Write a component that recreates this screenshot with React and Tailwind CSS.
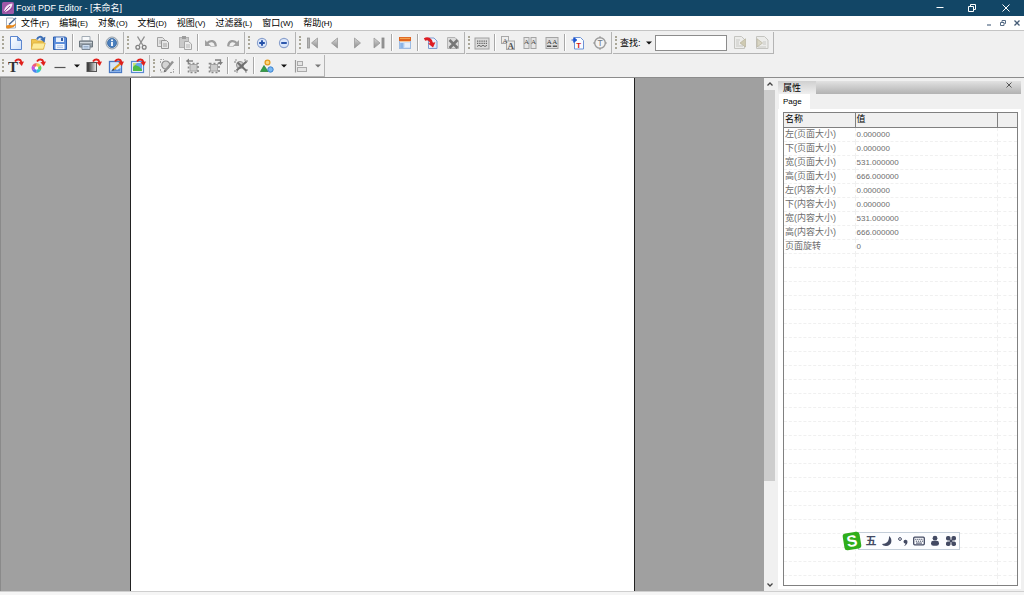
const menus = [
    ["文件", "F"],
    ["编辑", "E"],
    ["对象", "O"],
    ["文档", "D"],
    ["视图", "V"],
    ["过滤器", "L"],
    ["窗口", "W"],
    ["帮助", "H"],
];

const properties = [
    ["左(页面大小)", "0.000000"],
    ["下(页面大小)", "0.000000"],
    ["宽(页面大小)", "531.000000"],
    ["高(页面大小)", "666.000000"],
    ["左(内容大小)", "0.000000"],
    ["下(内容大小)", "0.000000"],
    ["宽(内容大小)", "531.000000"],
    ["高(内容大小)", "666.000000"],
    ["页面旋转", "0"],
];

// empty grid lines continue below the data
const rows = [...properties, ...Array.from({ length: 60 }, () => ["", ""])];

const redArrow = (
    <>
        <path d="M7 3.5 C9 .8 12.5 1 13.4 4" fill="none" stroke="#e0201c" strokeWidth="2" />
        <path d="M10.4 4.2 L16 3.4 L13.8 8 Z" fill="#e0201c" />
    </>
);

const icons = {
    new: (
        <>
            <path d="M2.5 1.5 H9.5 L13.5 5.5 V14.5 H2.5 Z" fill="url(#paper)" stroke="#5b86cf" />
            <path d="M9.5 1.5 V5.5 H13.5 Z" fill="#7fa9e6" stroke="#4f7cc8" strokeWidth=".8" />
        </>
    ),
    open: (
        <>
            <path d="M1.5 4.5 H6 L7.5 6 H13.5 V14 H1.5 Z" fill="#f0c650" stroke="#cfa02e" strokeWidth=".8" />
            <path d="M3 8 H15.2 L13.5 14.2 H1.2 Z" fill="#fdeb9a" stroke="#dcb03c" strokeWidth=".8" />
            <path d="M7 4.5 C8 1.5 11 1 12.6 3" fill="none" stroke="#3d6fb5" strokeWidth="2" />
            <path d="M10 4 L15.4 1.8 L14.6 7.4 Z" fill="#3d6fb5" />
        </>
    ),
    save: (
        <>
            <path d="M1.5 2 H13.5 L14.5 3 V14.5 H1.5 Z" fill="#5c8edb" stroke="#2f5fae" />
            <rect x="4" y="2.5" width="8" height="4.5" fill="#e8f0fb" />
            <rect x="9" y="3" width="2" height="3" fill="#2f5ba6" />
            <rect x="3.5" y="9" width="9" height="5.2" fill="#f4f8fd" />
            <path d="M5 10.8 H11 M5 12.6 H11" stroke="#9db8df" strokeWidth=".8" />
        </>
    ),
    print: (
        <>
            <path d="M4 1.5 H12 V6 H4 Z" fill="#f7f9fb" stroke="#a3acb5" />
            <path d="M1.5 6 H14.5 V12 H1.5 Z" fill="#9aa3aa" stroke="#6c767e" />
            <path d="M2 7.5 H14" stroke="#cfd6dc" />
            <path d="M4 9.5 H12 V14.5 H4 Z" fill="#cfdff2" stroke="#7a8692" />
            <path d="M5.5 11.5 H10.5 M5.5 13 H10.5" stroke="#8fa6c2" strokeWidth=".8" />
        </>
    ),
    info: (
        <>
            <circle cx="8" cy="8" r="6" fill="#d5dae0" stroke="#95a0aa" />
            <circle cx="8" cy="8" r="4.5" fill="#4a7fbe" stroke="#2b5c98" strokeWidth=".7" />
            <path d="M8 7 V11" stroke="#fff" strokeWidth="1.8" />
            <circle cx="8" cy="5.3" r="1" fill="#fff" />
        </>
    ),
    cut: (
        <>
            <path d="M4.5 1.5 L10 10.5 M11.5 1.5 L6 10.5" stroke="#8f8f8f" strokeWidth="1.4" />
            <circle cx="4.8" cy="12.2" r="1.9" fill="none" stroke="#808080" strokeWidth="1.3" />
            <circle cx="11.2" cy="12.2" r="1.9" fill="none" stroke="#808080" strokeWidth="1.3" />
        </>
    ),
    copy: (
        <>
            <path d="M2.5 2.5 H7.5 L9.5 4.5 V11.5 H2.5 Z" fill="#e4e4e4" stroke="#a3a3a3" />
            <path d="M4 6 H8 M4 8 H8" stroke="#b0b0b0" />
            <path d="M6.5 5.5 H11.5 L13.5 7.5 V13.5 H6.5 Z" fill="#e6e6e6" stroke="#969696" />
            <path d="M8 9 H12 M8 11 H12" stroke="#a0a0a0" />
        </>
    ),
    paste: (
        <>
            <rect x="2.5" y="2.5" width="9" height="10" fill="#c9c9c9" stroke="#b0b0b0" />
            <rect x="5" y="1" width="4" height="3" fill="#9c9c9c" />
            <path d="M7.5 6.5 H11.5 L14.5 9 V14.5 H7.5 Z" fill="#ececec" stroke="#a6a6a6" />
            <path d="M9 10 H13 M9 12 H13" stroke="#b4b4b4" />
        </>
    ),
    undo: (
        <>
            <path d="M4 8.500 C7 4.500 12.500 5.500 12.800 11" fill="none" stroke="#9c9c9c" strokeWidth="2.200" />
            <path d="M2 5 V11 H8 Z" fill="#a0a0a0" />
            <path d="M7 11.500 H13.500" stroke="#c4c4c4" />
        </>
    ),
    redo: (
        <>
            <path d="M12 8.500 C9 4.500 3.500 5.500 3.200 11" fill="none" stroke="#9c9c9c" strokeWidth="2.200" />
            <path d="M14 5 V11 H8 Z" fill="#a0a0a0" />
            <path d="M2.500 11.500 H9" stroke="#c4c4c4" />
        </>
    ),
    zoomIn: (
        <>
            <circle cx="8" cy="8" r="4.600" fill="#dbe7fb" stroke="#8aa0cc" strokeWidth="1.100" />
            <path d="M8 5.200 V10.800 M5.200 8 H10.800" stroke="#2350a8" strokeWidth="1.900" />
        </>
    ),
    zoomOut: (
        <>
            <circle cx="8" cy="8" r="4.600" fill="#dbe7fb" stroke="#8aa0cc" strokeWidth="1.100" />
            <path d="M5.200 8 H10.800" stroke="#2350a8" strokeWidth="1.900" />
        </>
    ),
    first: (
        <>
            <rect x="2.500" y="3" width="2" height="10" fill="#b5b5b5" stroke="#929292" strokeWidth=".8" />
            <path d="M12.500 3 V13 L6.500 8 Z" fill="url(#steel)" stroke="#9a9a9a" strokeWidth=".8" />
        </>
    ),
    prev: <path d="M10.500 3 V13 L4.500 8 Z" fill="url(#steel)" stroke="#9a9a9a" strokeWidth=".8" />,
    next: <path d="M5.500 3 V13 L11.500 8 Z" fill="url(#steel)" stroke="#9a9a9a" strokeWidth=".8" />,
    last: (
        <>
            <rect x="11" y="3" width="2" height="10" fill="#999" stroke="#858585" strokeWidth=".8" />
            <path d="M3 3 V13 L9 8 Z" fill="url(#steel)" stroke="#9a9a9a" strokeWidth=".8" />
        </>
    ),
    layout: (
        <>
            <rect x="2.500" y="2.500" width="11" height="11" fill="#cfe1f7" stroke="#9dbbe2" />
            <rect x="2" y="2" width="12" height="4" fill="#dd6420" />
            <path d="M3 3.400 H13" stroke="#f7ab56" />
            <path d="M3 6.500 H13" stroke="#f4c79c" />
            <rect x="3.200" y="8" width="3.300" height="5" fill="#8bb5e8" />
            <path d="M8 9 H13 M8 11 H13" stroke="#fff" strokeWidth="1.200" />
        </>
    ),
    insertPage: (
        <>
            <path d="M5.500 3 H11 L14 6 V13.500 H5.500 Z" fill="url(#paper)" stroke="#7d9bd0" />
            <path d="M1.500 4.500 C5 2.800 8 4.500 8.600 8.500" fill="none" stroke="#dd1d24" strokeWidth="3" />
            <path d="M5 8.600 L12.400 7.200 L10 12.600 Z" fill="#dd1d24" />
        </>
    ),
    deletePage: (
        <>
            <path d="M2.500 2.500 H10 L13.500 6 V13.500 H2.500 Z" fill="#dcdcdc" stroke="#b4b4b4" />
            <path d="M4.500 5 L12.500 13 M12.500 5 L4.500 13" stroke="#777" strokeWidth="2.600" />
        </>
    ),
    keyboard: (
        <>
            <rect x="1" y="3" width="14" height="11" fill="#dcdcdc" stroke="#a0a0a0" />
            <path d="M3 6.200 H13 M3 8.400 H13" stroke="#666" strokeWidth="1.200" strokeDasharray="1.300 .9" />
            <path d="M3 11.500 L5 10.300 L7 11.500 L9 10.300 L11 11.500 L13 10.300" fill="none" stroke="#666" />
        </>
    ),
    fontReplace: (
        <>
            <rect x="1.500" y="1.500" width="7" height="7" fill="#eee" stroke="#a8a8a8" />
            <rect x="6.500" y="6" width="8" height="8.500" fill="#e8e8e8" stroke="#a8a8a8" />
            <text x="2.600" y="7.500" fontSize="7" fontFamily="Liberation Serif" fill="#555">A</text>
            <text x="7.400" y="13.500" fontSize="9" fontWeight="bold" fontFamily="Liberation Serif" fill="#555">A</text>
        </>
    ),
    split: (
        <>
            <rect x="2" y="2.500" width="5" height="11" fill="#e6e6e6" stroke="#a4a4a4" />
            <rect x="9" y="2.500" width="5" height="11" fill="#e6e6e6" stroke="#a4a4a4" />
            <text x="2" y="9" fontSize="7" fontFamily="Liberation Serif" fill="#444">A</text>
            <text x="9" y="9" fontSize="7" fontFamily="Liberation Serif" fill="#444">A</text>
        </>
    ),
    merge: (
        <>
            <rect x="2" y="2.500" width="12" height="11" fill="#ddd" stroke="#a4a4a4" />
            <text x="2.800" y="9" fontSize="7" fontFamily="Liberation Serif" fill="#333">A</text>
            <text x="8.200" y="9" fontSize="7" fontFamily="Liberation Serif" fill="#333">A</text>
            <path d="M3 11.200 H7.200 M8.800 11.200 H13" stroke="#555" strokeWidth="1.400" />
        </>
    ),
    textPage: (
        <>
            <path d="M4.500 2.500 H10.500 L13.500 5.500 V14 H4.500 Z" fill="#fafcff" stroke="#6d92d6" />
            <path d="M1.500 5 H5 M3.800 2.600 L6.800 5 L3.800 7.400 Z" fill="#1c55d0" stroke="#1c55d0" />
            <text x="6.200" y="12.600" fontSize="8" fontWeight="bold" fontFamily="Liberation Sans" fill="#d81818">T</text>
        </>
    ),
    textCircle: (
        <>
            <circle cx="8" cy="8" r="5.300" fill="#f3f3f3" stroke="#9a9a9a" strokeWidth="1.400" />
            <text x="5.400" y="11" fontSize="8.500" fontFamily="Liberation Sans" fill="#6c7684">T</text>
            <path d="M8 1 V3 M8 13 V15 M1 8 H3 M13 8 H15" stroke="#999" />
        </>
    ),
    findPrev: (
        <>
            <path d="M2.500 1.500 H9.500 L12.500 4.500 V13.500 H2.500 Z" fill="#ececea" stroke="#c4c4c0" />
            <path d="M4 5 H8 M4 7 H7 M4 9 H7 M4 11 H11" stroke="#c8c8c4" />
            <path d="M13.500 3.800 V12 L8 8 Z" fill="#cfcab2" stroke="#b7b39d" strokeWidth=".7" />
        </>
    ),
    findNext: (
        <>
            <path d="M2.500 1.500 H10.500 L14 5 V13.500 H2.500 Z" fill="#ececea" stroke="#c4c4c0" />
            <path d="M9 7 H12 M9 9 H12 M4 12 H12" stroke="#c8c8c4" />
            <path d="M3 3.800 V12 L8.500 8 Z" fill="#d8d5c4" stroke="#b7b39d" strokeWidth=".7" />
        </>
    ),
    addText: (
        <>
            <text x="0" y="14" fontSize="15" fontWeight="bold" fontFamily="Liberation Serif" fill="#333">T</text>
            {redArrow}
        </>
    ),
    color: (
        <>
            <path d="M6.500 10 L6.500 5 A5 5 0 0 1 10.800 7.500 Z" fill="#f5c842" />
            <path d="M6.500 10 L10.800 7.500 A5 5 0 0 1 10.800 12.500 Z" fill="#5fd35a" />
            <path d="M6.500 10 L10.800 12.500 A5 5 0 0 1 6.500 15 Z" fill="#2cc6d8" />
            <path d="M6.500 10 L6.500 15 A5 5 0 0 1 2.200 12.500 Z" fill="#4a7ff0" />
            <path d="M6.500 10 L2.200 12.500 A5 5 0 0 1 2.200 7.500 Z" fill="#c154e0" />
            <path d="M6.500 10 L2.200 7.500 A5 5 0 0 1 6.500 5 Z" fill="#ef5b72" />
            <circle cx="6.500" cy="10" r="1.800" fill="#fff" />
            {redArrow}
        </>
    ),
    line: <path d="M2.500 9.500 H13.500" stroke="#555" strokeWidth="1.200" />,
    gradient: (
        <>
            <rect x="1" y="4.500" width="9.500" height="9" fill="url(#fade)" stroke="#555" />
            {redArrow}
        </>
    ),
    editImage: (
        <>
            <rect x="1.500" y="3.500" width="12" height="11" fill="#d5e6fa" stroke="#4777c4" strokeWidth="1.300" />
            <path d="M2.500 13.500 L6 9.500 L9 12 L12.500 10 V13.500 Z" fill="#5a90dd" />
            <path d="M5.500 11.500 L13 5" stroke="#e09a1c" strokeWidth="2.200" />
            <path d="M4 13 L5 10.800 L6.300 12.100 Z" fill="#333" />
            {redArrow}
        </>
    ),
    image: (
        <>
            <rect x="1.500" y="3.500" width="12" height="11" fill="#f4f8ff" stroke="#5b8ad2" strokeWidth="1.200" />
            <rect x="3" y="5" width="9" height="8" fill="#63a9ec" />
            <path d="M3 13 V7 C7 7 10 9 12 11.500 V13 Z" fill="#4dbb45" />
            <path d="M3 5 H7 L3 9 Z" fill="#c9e27a" />
            {redArrow}
        </>
    ),
    editPath: (
        <>
            <path d="M1.500 5 V1.500 H5 M11 14.500 H14.500 V11 M1.500 11 V14 H4" fill="none" stroke="#a4a4a4" strokeDasharray="2 1" />
            <circle cx="6.800" cy="7" r="4" fill="#d4d4d4" stroke="#8c8c8c" strokeWidth="1.200" />
            <path d="M6 13 L14 3.500" stroke="#939393" strokeWidth="2.400" />
            <path d="M4.500 14.500 L5.300 11.800 L7.400 13.600 Z" fill="#707070" />
        </>
    ),
    rotateLeft: (
        <>
            <rect x="5" y="6.500" width="7" height="6.500" fill="#ccc" stroke="#a6a6a6" />
            <path d="M3.500 5.500 H13 V14.500 H3.500 Z" fill="none" stroke="#888" strokeWidth="1.600" strokeDasharray="2 2" />
            <path d="M3 3 H8" stroke="#808080" strokeWidth="1.400" />
            <path d="M4 .5 V5.500 L.8 3 Z" fill="#808080" />
        </>
    ),
    rotateRight: (
        <>
            <rect x="3.500" y="6.500" width="7" height="6.500" fill="#ccc" stroke="#a6a6a6" />
            <path d="M2.500 5.500 H12 V14.500 H2.500 Z" fill="none" stroke="#888" strokeWidth="1.600" strokeDasharray="2 2" />
            <path d="M8 2 H13.500 V4" fill="none" stroke="#808080" strokeWidth="1.400" />
            <path d="M11 4 H16 L13.500 7.200 Z" fill="#808080" />
        </>
    ),
    clearPath: (
        <>
            <path d="M2 5 V2 H5 M11 2 H14 V5 M14 11 V14 H11 M5 14 H2 V11" fill="none" stroke="#909090" strokeWidth="1.200" strokeDasharray="2 1" />
            <circle cx="7" cy="7" r="3.600" fill="#c8c8c8" stroke="#999" />
            <path d="M3.500 12.500 L13.500 3.500 M4.500 4.500 L13.500 13" stroke="#707070" strokeWidth="2" />
        </>
    ),
    shapes: (
        <>
            <circle cx="8.500" cy="4.500" r="2.400" fill="#fbd77e" stroke="#e39a1d" strokeWidth="1.300" />
            <path d="M5 7.500 L9 13.500 H1.500 Z" fill="#35a048" stroke="#1f7a33" strokeWidth=".7" />
            <circle cx="11.500" cy="11.500" r="2.700" fill="#79b8f2" stroke="#3b82cf" />
        </>
    ),
    align: (
        <>
            <path d="M2.500 2 V14.500" stroke="#999" strokeWidth="1.200" />
            <rect x="4.500" y="3.500" width="5" height="4" fill="#e4e4e4" stroke="#aaa" />
            <rect x="4.500" y="9.500" width="9" height="4" fill="#e4e4e4" stroke="#aaa" />
        </>
    ),
};

function Tool({ icon, label }) {
    return (
        <button type="button" aria-label={label} className="flex w-[22px] items-center justify-center">
            <svg viewBox="0 0 16 16" className="size-4">{icons[icon]}</svg>
        </button>
    );
}

function Group({ label, children }) {
    return (
        <div role="toolbar" aria-label={label} className="flex h-[22px] items-stretch border-r border-b border-[#b4b4b4]">
            <div className="my-1 ml-0.5 mr-px w-0.5 border-l-2 border-dotted border-[#aaa798]" />
            {children}
        </div>
    );
}

function Sep() {
    return <div className="mx-px my-0.5 w-0.5 border-l border-[#a8a8a8] bg-white" />;
}

function Caret({ label, muted }) {
    return (
        <button type="button" aria-label={label} className="flex w-3 items-center justify-center">
            <svg viewBox="0 0 6 4" className="h-1 w-1.5">
                <path d="M0 .5 H6 L3 3.5 Z" fill={muted ? "#777" : "#111"} />
            </svg>
        </button>
    );
}

function TitleBar() {
    return (
        <header className="flex h-4 shrink-0 items-center bg-[#124666] text-white">
            <svg viewBox="0 0 12 12" className="ml-0.5 h-3 w-3">
                <rect width="12" height="12" rx="1.5" fill="#a058a8" />
                <path d="M2 10 C2 5 6 2 10.5 1.5 C10 6 7 9.5 2 10 Z" fill="#f4e6f5" />
                <path d="M1.5 10.5 L8 4 M5 10.5 L10.5 6" stroke="#8b3f96" strokeWidth=".9" />
            </svg>
            <h1 className="ml-0.5 text-[9px] leading-4">Foxit PDF Editor - [未命名]</h1>
            <div className="ml-auto flex h-4">
                <button type="button" aria-label="最小化" className="flex w-8 items-center justify-center">
                    <svg viewBox="0 0 8 8" className="size-2"><path d="M.5 3.5 H7.5" stroke="#fff" /></svg>
                </button>
                <button type="button" aria-label="还原" className="flex w-8 items-center justify-center">
                    <svg viewBox="0 0 8 8" className="size-2" fill="none" stroke="#fff">
                        <path d="M.5 2.5 H5.5 V7.5 H.5 Z M2.5 2.5 V.5 H7.5 V5.5 H5.5" />
                    </svg>
                </button>
                <button type="button" aria-label="关闭" className="flex w-9 items-center justify-center">
                    <svg viewBox="0 0 8 8" className="size-2"><path d="M.5 .5 L7.5 7.5 M7.5 .5 L.5 7.5" stroke="#fff" /></svg>
                </button>
            </div>
        </header>
    );
}

function MenuBar() {
    return (
        <nav className="flex h-[15px] shrink-0 items-center border-b border-[#c4c4c4] bg-white">
            <svg viewBox="0 0 12 12" className="ml-[5px] mr-1 h-3 w-3">
                <path d="M1.5 1 H8 L10.5 3.5 V11 H1.5 Z" fill="#fff" stroke="#a3afc0" />
                <path d="M1 9 C4 6.5 7 10.500 11 6 C11 9 8 11.500 1.500 11.500 Z" fill="#e88a1e" />
                <path d="M4 7.500 L11 1" stroke="#4f6b96" strokeWidth="1.600" />
            </svg>
            <div className="flex gap-[10px]">
                {menus.map(([name, key]) => (
                    <button key={key} type="button" className="text-[9px] leading-[14px]">
                        {name}<span className="text-[8px]">({key})</span>
                    </button>
                ))}
            </div>
            <div className="ml-auto flex h-[14px] items-center">
                <button type="button" aria-label="最小化文档" className="flex w-[14px] justify-center">
                    <svg viewBox="0 0 6 6" className="size-1.5"><path d="M1 5 H5" stroke="#556b85" strokeWidth="1.2" /></svg>
                </button>
                <button type="button" aria-label="还原文档" className="flex w-[14px] justify-center">
                    <svg viewBox="0 0 6 6" className="size-1.5" fill="none" stroke="#556b85">
                        <path d="M.5 2.5 H4 V5.5 H.5 Z M2 2 V.5 H5.5 V3.5 H4.5" />
                    </svg>
                </button>
                <button type="button" aria-label="关闭文档" className="flex w-[14px] justify-center">
                    <svg viewBox="0 0 6 6" className="size-1.5"><path d="M.5 .5 L5.5 5.5 M5.5 .5 L.5 5.5" stroke="#465c76" strokeWidth="1.3" /></svg>
                </button>
            </div>
        </nav>
    );
}

function Toolbars() {
    return (
        <div className="flex shrink-0 flex-col gap-px border-b border-[#8c8c8c] pt-px">
            <div className="flex gap-px">
                <Group label="文件">
                    <Tool icon="new" label="新建" />
                    <Tool icon="open" label="打开" />
                    <Tool icon="save" label="保存" />
                    <Sep />
                    <Tool icon="print" label="打印" />
                    <Sep />
                    <Tool icon="info" label="关于" />
                </Group>
                <Group label="编辑">
                    <Tool icon="cut" label="剪切" />
                    <Tool icon="copy" label="复制" />
                    <Tool icon="paste" label="粘贴" />
                    <Sep />
                    <Tool icon="undo" label="撤销" />
                    <Tool icon="redo" label="重做" />
                </Group>
                <Group label="缩放">
                    <Tool icon="zoomIn" label="放大" />
                    <Tool icon="zoomOut" label="缩小" />
                </Group>
                <Group label="文档">
                    <Tool icon="first" label="首页" />
                    <Tool icon="prev" label="上一页" />
                    <Tool icon="next" label="下一页" />
                    <Tool icon="last" label="末页" />
                    <Sep />
                    <Tool icon="layout" label="页面布局" />
                    <Sep />
                    <Tool icon="insertPage" label="插入页面" />
                    <Tool icon="deletePage" label="删除页面" />
                </Group>
                <Group label="文本">
                    <Tool icon="keyboard" label="键盘" />
                    <Sep />
                    <Tool icon="fontReplace" label="替换字体" />
                    <Tool icon="split" label="拆分文本" />
                    <Tool icon="merge" label="合并文本" />
                    <Sep />
                    <Tool icon="textPage" label="导入文本" />
                    <Tool icon="textCircle" label="文本属性" />
                </Group>
                <Group label="查找">
                    <label htmlFor="find" className="mx-0.5 self-center text-[9px] leading-3">查找:</label>
                    <Caret label="查找选项" />
                    <input id="find" type="text" className="mr-0.5 h-4 w-[72px] self-center border border-[#8c8c8c] bg-white px-1 text-[9px]" />
                    <Tool icon="findPrev" label="查找上一个" />
                    <Tool icon="findNext" label="查找下一个" />
                </Group>
            </div>
            <div className="flex gap-px">
                <Group label="对象">
                    <Tool icon="addText" label="添加文本" />
                    <Tool icon="color" label="颜色" />
                    <Tool icon="line" label="线条" />
                    <Caret label="线条选项" />
                    <Tool icon="gradient" label="渐变" />
                    <Tool icon="editImage" label="编辑图像" />
                    <Tool icon="image" label="添加图像" />
                </Group>
                <Group label="路径">
                    <Tool icon="editPath" label="编辑路径" />
                    <Sep />
                    <Tool icon="rotateLeft" label="向左旋转" />
                    <Tool icon="rotateRight" label="向右旋转" />
                    <Sep />
                    <Tool icon="clearPath" label="清除路径" />
                    <Sep />
                    <Tool icon="shapes" label="图形" />
                    <Caret label="图形选项" />
                    <Tool icon="align" label="对齐" />
                    <Caret label="对齐选项" muted />
                </Group>
            </div>
        </div>
    );
}

function ScrollBar() {
    return (
        <div className="flex w-3 shrink-0 flex-col bg-[#f0f0f0]">
            <button type="button" aria-label="向上滚动" className="flex h-3 items-center justify-center">
                <svg viewBox="0 0 6 4" className="h-1 w-1.5"><path d="M.5 3.5 L3 1 L5.5 3.5" fill="none" stroke="#444" strokeWidth="1.3" /></svg>
            </button>
            <div className="flex flex-1 flex-col">
                <div className="mr-px h-4/5 bg-[#cdcdcd]" />
            </div>
            <button type="button" aria-label="向下滚动" className="flex h-3 items-center justify-center">
                <svg viewBox="0 0 6 4" className="h-1 w-1.5"><path d="M.5 .5 L3 3 L5.5 .5" fill="none" stroke="#444" strokeWidth="1.3" /></svg>
            </button>
        </div>
    );
}

function PropertiesPanel() {
    return (
        <aside className="mr-[3px] ml-0.5 flex w-[243px] shrink-0 flex-col pt-[3px] pb-0.5">
            <div className="flex h-[13px] bg-linear-to-b from-[#e2e2e2] to-[#b2b2b2]">
                <h2 className="w-[38px] bg-linear-to-b from-[#d0d0d0] to-[#efefef] pl-[5px] text-[9px] leading-[14px]">属性</h2>
                <button type="button" aria-label="关闭面板" className="mr-2 ml-auto flex size-2 items-center justify-center">
                    <svg viewBox="0 0 6 6" className="size-1.5"><path d="M.5 .5 L5.5 5.5 M5.5 .5 L.5 5.5" stroke="#555" /></svg>
                </button>
            </div>
            <div className="flex h-[15px] shrink-0">
                <button type="button" className="ml-px bg-white pr-2 pl-1 text-[8px] leading-[15px]">Page</button>
            </div>
            <div className="flex min-h-0 flex-1 flex-col bg-white p-[3px] pl-[5px]">
                <div className="min-h-0 flex-1 overflow-hidden border border-[#808080]">
                    <table className="w-full table-fixed border-collapse text-left">
                        <thead>
                            <tr className="h-[14px] border-b border-[#808080] bg-[#f0f0f0] text-[9px] leading-[13px]">
                                <th className="w-[71px] border-r border-[#808080] pl-px font-normal">名称</th>
                                <th className="border-r border-[#808080] pl-px font-normal">值</th>
                                <td className="w-5" />
                            </tr>
                        </thead>
                        <tbody className="text-[#6d6d6d]">
                            {rows.map(([name, value], i) => (
                                <tr key={i} className="h-[14px] border-b border-dashed border-[#f0f0f0] leading-[13px]">
                                    <td className="border-r border-dashed border-[#f0f0f0] pl-px text-[9px] whitespace-nowrap">{name}</td>
                                    <td className="border-r border-dashed border-[#f0f0f0] pl-px text-[8px]">{value}</td>
                                    <td />
                                </tr>
                            ))}
                        </tbody>
                    </table>
                </div>
            </div>
        </aside>
    );
}

// floating input method bar, sits over the panel
function ImeBar() {
    return (
        <div className="absolute right-16 bottom-11 flex h-5 items-center">
            <svg viewBox="0 0 20 20" className="z-10 -mr-1 size-5">
                <g transform="rotate(-9 10 10)">
                    <rect x="1.5" y="1.5" width="17" height="17" rx="3" fill="#2fae1b" />
                    <text x="10" y="15.5" textAnchor="middle" fontSize="16" fontWeight="bold" fontFamily="Liberation Sans" fill="#fff">S</text>
                </g>
            </svg>
            <div className="flex h-[18px] items-center gap-1 border border-[#c3cdd8] bg-[#fcfdff] pr-0.5 pl-1.5 text-[#434a63]">
                <button type="button" className="w-3 text-[11px] leading-4 font-bold">五</button>
                <button type="button" aria-label="半角" className="flex w-3 justify-center">
                    <svg viewBox="0 0 12 12" className="size-3"><path d="M8 1 C12 4 11 11 5 11 C3 11 1.5 10 1 9 C5.5 9 8.5 6 8 1 Z" fill="currentColor" /></svg>
                </button>
                <button type="button" aria-label="中文标点" className="flex w-3 justify-center">
                    <svg viewBox="0 0 12 12" className="size-3">
                        <circle cx="3" cy="4" r="1.4" fill="none" stroke="currentColor" />
                        <path d="M6.5 6.500 A2 2 0 1 1 10.500 7 C10.300 9 9 10.500 7 11 C8 10 8.500 9.500 8.400 8.500 A2 2 0 0 1 6.500 6.500 Z" fill="currentColor" />
                    </svg>
                </button>
                <button type="button" aria-label="软键盘" className="flex w-3 justify-center">
                    <svg viewBox="0 0 12 12" className="size-3">
                        <rect x=".7" y="2.2" width="10.6" height="7.6" rx="1" fill="none" stroke="currentColor" strokeWidth="1.3" />
                        <path d="M2.2 4.3 H10 M2.8 6.2 H10" stroke="currentColor" strokeDasharray="1.2 .8" />
                        <path d="M3 8.1 H9" stroke="currentColor" />
                    </svg>
                </button>
                <button type="button" aria-label="账户" className="flex w-3 justify-center">
                    <svg viewBox="0 0 12 12" className="size-3" fill="currentColor">
                        <circle cx="6" cy="3.2" r="2.4" />
                        <rect x="2" y="5.8" width="8" height="5" rx="2.4" />
                    </svg>
                </button>
                <button type="button" aria-label="工具箱" className="flex w-3 justify-center">
                    <svg viewBox="0 0 12 12" className="size-3" fill="currentColor">
                        <rect x="1" y="1" width="4.5" height="4.5" rx="1.8" />
                        <rect x="6.5" y="1" width="4.5" height="4.5" rx="1.8" />
                        <rect x="1" y="6.5" width="4.5" height="4.5" rx="1.8" />
                        <rect x="6.5" y="6.5" width="4.5" height="4.5" rx="1.8" />
                        <rect x="4.5" y="4.5" width="3" height="3" />
                    </svg>
                </button>
            </div>
        </div>
    );
}

export default function App() {
    return (
        <div className="relative flex h-screen w-full flex-col overflow-hidden bg-[#f0f0f0] font-['Liberation_Sans','Noto_Sans_CJK_SC',sans-serif] text-black">
            {/* gradients shared by the toolbar icons */}
            <svg className="absolute size-0" aria-hidden="true">
                <defs>
                    <linearGradient id="paper" x1="0" y1="0" x2="1" y2="1">
                        <stop offset="0" stopColor="#fff" />
                        <stop offset="1" stopColor="#cfe0f8" />
                    </linearGradient>
                    <linearGradient id="steel" x1="0" y1="0" x2="0" y2="1">
                        <stop offset="0" stopColor="#d8d8d8" />
                        <stop offset="1" stopColor="#8c8c8c" />
                    </linearGradient>
                    <linearGradient id="fade">
                        <stop offset="0" stopColor="#222" />
                        <stop offset="1" stopColor="#eee" />
                    </linearGradient>
                </defs>
            </svg>
            <TitleBar />
            <MenuBar />
            <Toolbars />
            <div className="flex min-h-0 flex-1">
                <main className="flex min-w-0 flex-1 justify-center border-l border-[#8a8a8a] bg-[#a0a0a0]">
                    <div className="w-[505px] border-x border-[#222] bg-white" />
                </main>
                <ScrollBar />
                <PropertiesPanel />
            </div>
            <footer className="h-1 shrink-0 border-t border-[#cfcfcf] bg-[#f5f5f5]" />
            <ImeBar />
        </div>
    );
}
